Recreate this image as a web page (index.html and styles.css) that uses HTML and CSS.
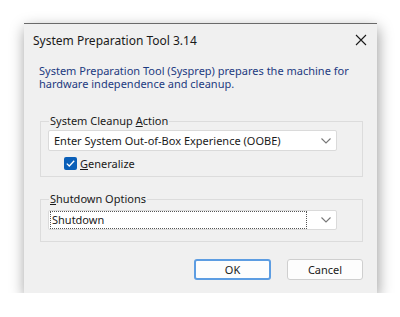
FILE: index.html
```html
<!DOCTYPE html>
<html lang="en">
<head>
<meta charset="UTF-8" />
<meta name="viewport" content="width=device-width, initial-scale=1" />
<title>System Preparation Tool 3.14</title>
<link rel="stylesheet" href="styles.css">
</head>
<body>
  <div class="dialog" role="dialog" aria-labelledby="dlg-title">
    <div class="titlebar">
      <span id="dlg-title" class="title">System Preparation Tool 3.14</span>
      <svg class="close" width="12" height="12" viewBox="0 0 12 12" aria-label="Close">
        <path d="M1 1 L11 11 M11 1 L1 11" stroke="#1a1a1a" stroke-width="1.1" fill="none"/>
      </svg>
    </div>

    <p class="intro">System Preparation Tool (Sysprep) prepares the machine for hardware independence and cleanup.</p>

    <fieldset class="group">
      <legend>System Cleanup <u>A</u>ction</legend>
      <div class="combo">
        <span class="combo-text">Enter System Out-of-Box Experience (OOBE)</span>
        <svg class="chevron" width="10" height="6" viewBox="0 0 10 6"><path d="M0.5 0.5 L5 5 L9.5 0.5" stroke="#777" stroke-width="1.1" fill="none"/></svg>
      </div>
      <label class="check">
        <span class="box">
          <svg width="9" height="7" viewBox="0 0 9 7"><path d="M0.8 3.6 L3.3 6 L8.2 0.8" stroke="#fff" stroke-width="1.3" fill="none"/></svg>
        </span>
        <span><u>G</u>eneralize</span>
      </label>
    </fieldset>

    <fieldset class="group group-last">
      <legend><u>S</u>hutdown Options</legend>
      <div class="combo combo-focus">
        <span class="combo-text focus-rect">Shutdown</span>
        <svg class="chevron" width="10" height="6" viewBox="0 0 10 6"><path d="M0.5 0.5 L5 5 L9.5 0.5" stroke="#777" stroke-width="1.1" fill="none"/></svg>
      </div>
    </fieldset>

    <div class="buttons">
      <button class="btn btn-default" type="button">OK</button>
      <button class="btn" type="button">Cancel</button>
    </div>
  </div>
</body>
</html>
```

FILE: styles.css
```css
/* Temel */
*,
*::before,
*::after {
  box-sizing: border-box;
}

body {
  margin: 0;
  background: #fff;
  font-family: 'Noto Sans', 'Open Sans', sans-serif;
  font-size: 11px;
  color: #1a1a1a;
}

u {
  text-decoration-thickness: 1px;
  text-underline-offset: 1px;
}

/* Pencere */
.dialog {
  width: 353px;
  height: 270px;
  margin: 23px 0 0 24px;
  background: #f0f0f0;
  border-top: 1px solid #6a6a6a;
  box-shadow: 1px 5px 14px rgba(0, 0, 0, 0.4);
  padding: 0 14px 11px 16px;
  display: flex;
  flex-direction: column;
}

.titlebar {
  height: 32px;
  margin-left: -7px;
  display: flex;
  align-items: center;
  justify-content: space-between;
}

.title {
  font-size: 12px;
  color: #1a1a1a;
}

.close {
  margin-right: -4px;
}

.intro {
  margin: 8px 0 0 -1px;
  line-height: 13px;
  color: #1c3a80;
  width: 330px;
}

/* Grup kutuları */
.group {
  margin: 24px 0 0 0;
  padding: 2px 25px 6px 7px;
  border: 1px solid #dcdcdc;
  min-width: 0;
}

.group legend {
  margin-left: 1px;
  padding: 0 1px;
  line-height: 14px;
  font-size: 11px;
}

.group-last {
  margin-top: 15px;
  padding-top: 4px;
  padding-bottom: 11px;
}

.combo {
  height: 21px;
  background: #fff;
  border: 1px solid #dadada;
  border-radius: 2px;
  display: flex;
  align-items: center;
  justify-content: space-between;
  padding: 0 5px 0 5px;
}

.combo-focus {
  height: 20px;
  padding-left: 1px;
}

.focus-rect {
  flex: 1;
  height: 18px;
  line-height: 16px;
  border: 1px dotted #555;
  padding-left: 1px;
  margin-right: 14px;
}

.chevron {
  flex: none;
}

/* Onay kutusu */
.check {
  display: flex;
  align-items: center;
  gap: 3px;
  margin: 6px 0 0 16px;
  height: 13px;
}

.box {
  width: 13px;
  height: 13px;
  border-radius: 2px;
  background: #0a5fb8;
  display: flex;
  align-items: center;
  justify-content: center;
}

/* Butonlar */
.buttons {
  display: flex;
  justify-content: flex-end;
  gap: 16px;
  margin-top: 17px;
}

.btn {
  width: 76px;
  height: 21px;
  background: #fdfdfd;
  border: 1px solid #cfcfcf;
  border-radius: 3px;
  font-family: inherit;
  font-size: 11px;
  color: #1a1a1a;
  padding: 0;
}

.btn-default {
  width: 77px;
  border: 2px solid #5d9de2;
}
```
